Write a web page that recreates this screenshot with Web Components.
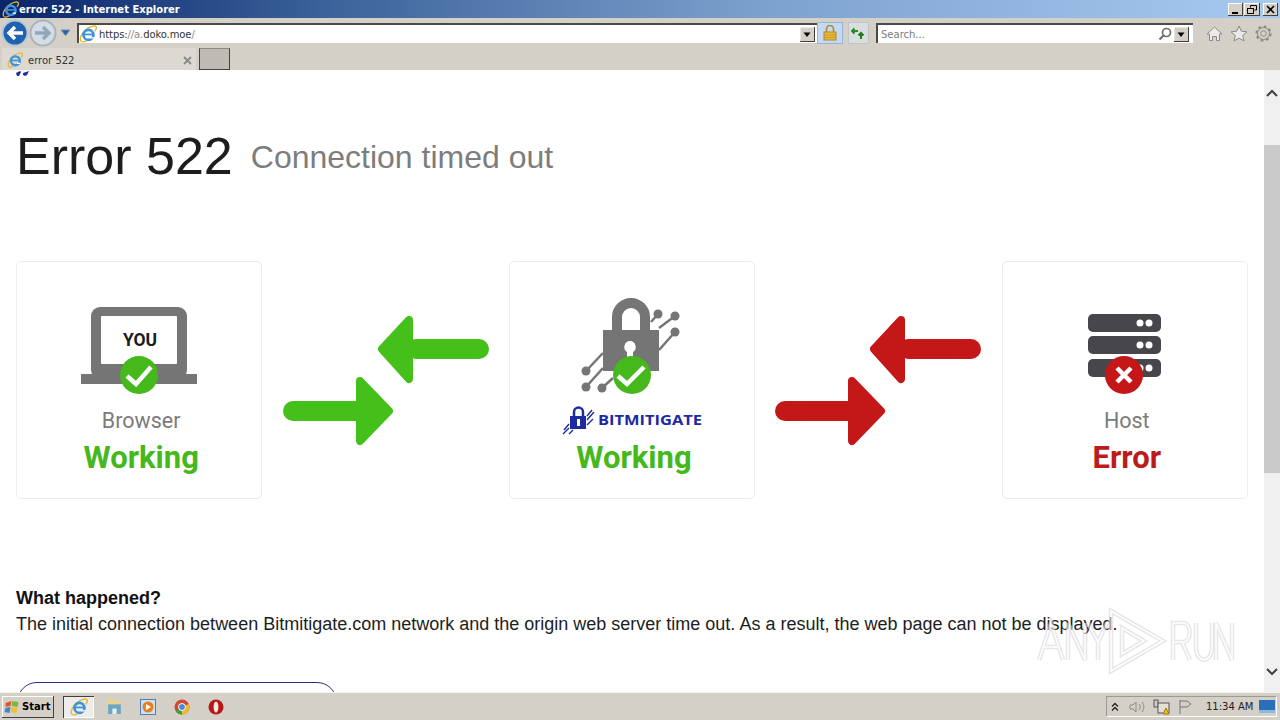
<!DOCTYPE html>
<html>
<head>
<meta charset="utf-8">
<title>error 522 - Internet Explorer</title>
<style>
  html, body { margin: 0; height: 100%; overflow: hidden; }
  body { display: flex; flex-direction: column; width: 1280px; height: 720px; background: #d4d0c8; font-family: "Liberation Sans", Arial, sans-serif; }
  .row { display: flex; flex: 1; min-height: 0; }
  err-page { flex: 1; min-width: 0; }
</style>
</head>
<body>
<ie-titlebar>error 522 - Internet Explorer</ie-titlebar>
<ie-navbar url="https://a.doko.moe/"></ie-navbar>
<ie-tabbar>error 522</ie-tabbar>
<div class="row">
  <err-page>
    <status-card slot="browser" label="Browser" state="Working" tone="ok">
      <svg slot="icon" style="margin-top:38px" width="118" height="96" viewBox="0 0 118 96">
        <rect x="11" y="7" width="96" height="72" rx="9" fill="#757575"/>
        <rect x="21" y="16" width="76" height="48" rx="1" fill="#fff"/>
        <rect x="1" y="74" width="116" height="10" fill="#757575"/>
        <text x="60" y="46" text-anchor="middle" font-family="Roboto, sans-serif" font-weight="700" font-size="17.500" fill="#1b1b1b">YOU</text>
        <circle cx="59" cy="75" r="19" fill="#45b81c"/>
        <path d="M47 76l9 8 15-17" fill="none" stroke="#fff" stroke-width="4.500"/>
      </svg>
    </status-card>
    <flow-arrows slot="arrow1" color="#45c01a"></flow-arrows>
    <status-card slot="mitigate" state="Working" tone="ok">
      <svg slot="icon" style="margin-top:28px" width="144" height="146" viewBox="560 290 144 146">
        <g fill="none" stroke="#757575" stroke-width="2.500">
          <path d="M651 322l7-8M659 328l16-12M659 350l16-18M603 353l-17 18M603 368l-17 19M613 378l-11 10"/>
        </g>
        <g fill="#757575">
          <circle cx="658" cy="314" r="4.500"/><circle cx="675" cy="316" r="4.500"/><circle cx="675" cy="332" r="4.500"/>
          <circle cx="586" cy="371" r="4.500"/><circle cx="586" cy="387" r="4.500"/><circle cx="602" cy="388" r="4.500"/>
        </g>
        <path d="M617 331v-14a14 14 0 0 1 28 0v14" fill="none" stroke="#757575" stroke-width="10"/>
        <rect x="603" y="330" width="56" height="41" fill="#757575"/>
        <path d="M630 341a6 6 0 0 1 3 11v8h-6v-8a6 6 0 0 1 3-11z" fill="#fff"/>
        <circle cx="632" cy="375" r="19" fill="#45b81c"/>
        <path d="M618 376l9 8 17-17" fill="none" stroke="#fff" stroke-width="4.500"/>
        <path d="M574 418v-6a4.500 4.500 0 0 1 9 0v6" fill="none" stroke="#1c2ba0" stroke-width="2.500"/>
        <rect x="570" y="416" width="16" height="13" fill="#1c2ba0"/>
        <rect x="577" y="419" width="3" height="7" fill="#fff"/>
        <path d="M587 416l5-6M587 420l7-8M587 425l6-6M569 424l-5 6M569 428l-6 6M573 430l-4 4" stroke="#1c2ba0" stroke-width="1.400"/>
        <text x="598" y="425" textLength="104" lengthAdjust="spacingAndGlyphs" font-family="'Open Sans', sans-serif" font-weight="700" font-size="14" fill="#1c2ba0">BITMITIGATE</text>
      </svg>
    </status-card>
    <flow-arrows slot="arrow2" color="#c41818"></flow-arrows>
    <status-card slot="host" label="Host" state="Error" tone="bad">
      <svg slot="icon" style="margin-top:38px" width="74" height="96" viewBox="1088 300 74 96">
        <g fill="#46464b">
          <rect x="1088" y="314" width="73" height="18" rx="5"/>
          <rect x="1088" y="336" width="73" height="18" rx="5"/>
          <rect x="1088" y="359" width="73" height="18" rx="5"/>
        </g>
        <g fill="#fff">
          <circle cx="1140" cy="323" r="3.500"/><circle cx="1149" cy="323" r="3.500"/>
          <circle cx="1140" cy="345" r="3.500"/><circle cx="1149" cy="345" r="3.500"/>
          <circle cx="1140" cy="368" r="3.500"/><circle cx="1149" cy="368" r="3.500"/>
        </g>
        <circle cx="1124" cy="375" r="19" fill="#c41818"/>
        <path d="M1117 368l14 14M1131 368l-14 14" stroke="#fff" stroke-width="4.500"/>
      </svg>
    </status-card>
  </err-page>
  <page-scrollbar></page-scrollbar>
</div>
<win-taskbar></win-taskbar>

<script>
// shared IE "e" logo, used in the title bar, address bar, tab and taskbar
const IE_LOGO = (size) => `
  <svg width="${size}" height="${size}" viewBox="0 0 20 20">
    <path d="M2 18C0 14 4 7 10 3.500c4-2.500 8-3 9-1.500 .8 1.300-.3 3.500-1.500 5" fill="none" stroke="#e6b52c" stroke-width="1.500"/>
    <circle cx="10.500" cy="11" r="5.500" fill="none" stroke="#3d93dc" stroke-width="3"/>
    <path d="M6 10.500h9.500" stroke="#3d93dc" stroke-width="2"/>
    <path d="M16.500 13.500h-4v1.500h4z" fill="#fff"/>
    <path d="M2 18c1 1.300 3.500 1 6.500-.3" fill="none" stroke="#e6b52c" stroke-width="1.400"/>
  </svg>`;

class IeTitlebar extends HTMLElement {
  constructor() {
    super();
    this.attachShadow({ mode: "open" });
    this.shadowRoot.innerHTML = `
      <style>
        :host { display: flex; align-items: center; height: 18px; flex: none; padding: 0 2px 0 2px;
          background: linear-gradient(90deg, #0a246a 0%, #3a6199 25%, #7ea2cf 60%, #a6caf0 100%); }
        .t { flex: 1; color: #fff; font: 700 10px "DejaVu Sans", Tahoma, sans-serif; white-space: nowrap; }
        .btns { display: flex; gap: 1px; }
        .b { width: 15px; height: 13px; background: #d4d0c8; box-shadow: inset -1px -1px #404040, inset 1px 1px #fff; display: flex; align-items: center; justify-content: center; }
        .b:nth-child(2) { width: 16px; margin-right: 2px; }
      </style>
      ${IE_LOGO(17)}
      <span class="t"><slot></slot></span>
      <div class="btns">
        <div class="b"><svg width="9" height="9"><rect x="1" y="7" width="6" height="2"/></svg></div>
        <div class="b"><svg width="10" height="9" fill="none" stroke="#000"><path d="M3.500 2.500V.5h6v4.500h-2"/><rect x=".5" y="3.500" width="6" height="5"/></svg></div>
        <div class="b"><svg width="9" height="9" stroke="#000" stroke-width="1.600"><path d="M1 1l7 7M8 1L1 8"/></svg></div>
      </div>`;
  }
}

class IeNavbar extends HTMLElement {
  constructor() {
    super();
    this.attachShadow({ mode: "open" });
    const combo = `<svg class="combo" width="15" height="15"><rect width="15" height="15" fill="#d4d0c8"/><path d="M0 15V0h15" fill="none" stroke="#fff"/><path d="M15 0v15H0" fill="none" stroke="#404040" stroke-width="2"/><path d="M3.500 5.500h7l-3.500 4.500z"/></svg>`;
    this.shadowRoot.innerHTML = `
      <style>
        :host { display: flex; align-items: center; height: 30px; flex: none; padding: 0 0 0 1px; box-sizing: border-box;
          background: #d4d0c8; font: 10px "DejaVu Sans", Tahoma, sans-serif; }
        .nav { display: flex; align-items: center; width: 76px; flex: none; }
        .input { height: 20px; box-sizing: border-box; display: flex; align-items: center; background: #fff;
          border-top: 2px solid #4b4a44; border-left: 2px solid #4b4a44; padding-right: 2px; }
        .addr { width: 740px; flex: none; }
        .addr .u { flex: 1; margin-left: 2px; color: #333; letter-spacing: -.1px; }
        .u i { font-style: normal; color: #8a8a8a; }
        .lock { width: 26px; height: 22px; margin-left: 0; box-sizing: border-box; background: #c5d9f3; border: 1px solid #97b4da; display: flex; justify-content: center; align-items: center; }
        .refresh { width: 21px; height: 22px; margin-left: 5px; box-sizing: border-box; background: #d9dfe0; border: 1px solid #c1c5c2; display: flex; justify-content: center; align-items: center; }
        .search { width: 317px; flex: none; margin-left: 7px; padding-right: 4px; }
        .search .q { flex: 1; margin-left: 3px; color: #7c7c7c; }
        .tools { display: flex; align-items: center; gap: 7px; margin-left: 13px; }
      </style>
      <div class="nav">
        <svg width="28" height="28" viewBox="0 0 28 28">
          <circle cx="14" cy="14" r="12.500" fill="#1e62b0" stroke="#b8c7d8" stroke-width="2"/>
          <path d="M22 14H9M14 8l-6 6 6 6" fill="none" stroke="#fff" stroke-width="3.400"/>
        </svg>
        <svg width="28" height="28" viewBox="0 0 28 28">
          <circle cx="14" cy="14" r="12.500" fill="#d5dde4" stroke="#a7b3bd" stroke-width="2"/>
          <path d="M6 14h13M14 8l6 6-6 6" fill="none" stroke="#8fa6bb" stroke-width="3.400"/>
        </svg>
        <svg width="11" height="8" style="margin-left:3px"><path d="M1 1h9L5.500 6.500z" fill="#1e62b0" stroke="#7a8b9c"/></svg>
      </div>
      <div class="input addr">
        ${IE_LOGO(18)}
        <span class="u">https:<i>//a.</i>doko.moe<i>/</i></span>
        ${combo}
      </div>
      <div class="lock">
        <svg width="14" height="16" viewBox="0 0 14 16"><path d="M3.500 7V4a3.500 3.500 0 0 1 7 0v3" fill="none" stroke="#b48a1c" stroke-width="1.600"/><rect x="1" y="7" width="12" height="8" fill="#e6b93c" stroke="#b48a1c"/><path d="M1 10h12M1 12.500h12" stroke="#b48a1c" stroke-width=".6"/></svg>
      </div>
      <div class="refresh">
        <svg width="15" height="13" viewBox="0 0 15 13" fill="none" stroke="#2c8a22" stroke-width="2"><path d="M1 4h6M3.500 1.500L1 4l2.500 2.500"/><path d="M10 12V6M7.500 8.500L10 6l2.500 2.500" stroke="#1f7a1a"/></svg>
      </div>
      <div class="input search">
        <span class="q">Search...</span>
        <svg width="14" height="14" viewBox="0 0 14 14" fill="none" stroke="#6d6d6d" stroke-width="1.700" style="margin-right:2px"><circle cx="8.500" cy="5.500" r="4"/><path d="M5.500 8.500L1.500 12.500" stroke-width="2.200"/></svg>
        ${combo}
      </div>
      <div class="tools">
        <svg width="17" height="17" viewBox="0 0 17 17" fill="#eceae6" stroke="#8c8a86"><path d="M1 9l7.500-7 7.500 7h-2.500v6.500h-3v-4h-4v4h-3V9z"/></svg>
        <svg width="18" height="17" viewBox="0 0 18 17" fill="#eceae6" stroke="#8c8a86"><path d="M9 1l2.300 5.200 5.700.6-4.300 3.700 1.300 5.500L9 13.100 4 16l1.300-5.500L1 6.800l5.700-.6z"/></svg>
        <svg width="17" height="17" viewBox="0 0 17 17" fill="none" stroke="#8c8a86"><circle cx="8.500" cy="8.500" r="2.800"/><circle cx="8.500" cy="8.500" r="6" stroke-width="1"/><circle cx="8.500" cy="8.500" r="7" stroke-width="2.200" stroke-dasharray="2.700 2.800" /></svg>
      </div>`;
  }
}

class IeTabbar extends HTMLElement {
  constructor() {
    super();
    this.attachShadow({ mode: "open" });
    this.shadowRoot.innerHTML = `
      <style>
        :host { display: flex; align-items: flex-end; height: 22px; flex: none; padding-left: 2px; box-sizing: border-box;
          background: #d4d0c8; font: 10px "DejaVu Sans", Tahoma, sans-serif; color: #333; }
        .tab { width: 194px; height: 22px; box-sizing: border-box; display: flex; align-items: center; padding: 2px 4px 0 5px; background: #dcd8d2; }
        .tab span { flex: 1; margin-left: 5px; }
        .new { width: 31px; height: 22px; box-sizing: border-box; margin-left: 3px; background: #bfbab4; border: 1px solid #45433f; border-top-color: #8c8a86; }
      </style>
      <div class="tab">
        ${IE_LOGO(16)}
        <span><slot></slot></span>
        <svg width="9" height="9" stroke="#8c8a86" stroke-width="1.800"><path d="M1 1l7 7M8 1L1 8"/></svg>
      </div>
      <div class="new"></div>`;
  }
}

class StatusCard extends HTMLElement {
  constructor() {
    super();
    this.attachShadow({ mode: "open" });
    const label = this.getAttribute("label");
    const tone = this.getAttribute("tone") === "bad" ? "#bd1a1a" : "#45b81c";
    this.shadowRoot.innerHTML = `
      <style>
        :host { display: flex; flex-direction: column; align-items: center; height: 238px; box-sizing: border-box;
          background: #fff; border: 1px solid #ececec; border-radius: 5px; font-family: Roboto, "Liberation Sans", sans-serif; }
        .icon { height: 146px; width: 100%; display: flex; justify-content: center; align-items: flex-start; }
        :host(:not([label])) .icon { height: 177px; }
        .label { height: 31px; font-size: 21.500px; line-height: 26px; color: #7b7b7b; padding-left: 4px; }
        .state { font-size: 31px; line-height: 38px; font-weight: 700; color: ${tone}; padding-left: 4px; }
      </style>
      <div class="icon"><slot name="icon"></slot></div>
      ${label ? `<div class="label">${label}</div>` : ""}
      <div class="state">${this.getAttribute("state")}</div>`;
  }
}

class FlowArrows extends HTMLElement {
  constructor() {
    super();
    this.attachShadow({ mode: "open" });
    const c = this.getAttribute("color");
    this.shadowRoot.innerHTML = `
      <style>
        :host { display: flex; justify-content: center; align-items: center; height: 238px; }
        svg { display: block; }
      </style>
      <svg width="210" height="133" viewBox="0 0 210 133">
        <g fill="${c}" stroke="${c}" stroke-linejoin="round">
          <path d="M135 35h63" stroke-width="20" stroke-linecap="round"/>
          <path d="M128 6L101 35l27 30z" stroke-width="8"/>
          <path d="M12 97h68" stroke-width="20" stroke-linecap="round"/>
          <path d="M79 67l29 30-29 30z" stroke-width="8"/>
        </g>
      </svg>`;
  }
}

class ErrPage extends HTMLElement {
  constructor() {
    super();
    this.attachShadow({ mode: "open" });
    this.shadowRoot.innerHTML = `
      <style>
        :host { display: block; position: relative; overflow: hidden; background: #fff; color: #1d1d1d;
          font-family: "Liberation Sans", Arial, sans-serif; }
        .peek { display: block; margin-left: 16px; height: 7px; }
        h1 { margin: 46px 0 0 16px; display: flex; align-items: center; height: 66px; font-weight: 400; font-size: 52px; line-height: 66px; }
        h1 span { margin-left: 18px; padding-top: 2px; font-size: 32px; color: #7d7d7d; }
        .flow { display: grid; grid-template-columns: repeat(5, 246.4px); margin: 72px 0 0 16px; }
        h2 { margin: 87px 0 0 16px; font-size: 18px; line-height: 24px; font-weight: 700; color: #111; }
        p { margin: 2px 0 0 16px; font-size: 18px; line-height: 24px; color: #1d1d1d; white-space: nowrap; }
        .more { margin: 46px 0 0 17px; width: 320px; height: 60px; box-sizing: border-box; border: 1px solid #2b2b80; border-radius: 20px; }
        .mark { position: absolute; left: 1036px; top: 536px; opacity: .6; }
      </style>
      <svg class="peek" width="16" height="7" viewBox="0 0 16 7" fill="#1c2ba0"><path d="M0 3l4-2 1 1-2 4H1zM7 3l6-2-2 4-2 1-2-1z"/></svg>
      <h1>Error 522<span>Connection timed out</span></h1>
      <div class="flow">
        <slot name="browser"></slot>
        <slot name="arrow1"></slot>
        <slot name="mitigate"></slot>
        <slot name="arrow2"></slot>
        <slot name="host"></slot>
      </div>
      <h2>What happened?</h2>
      <p>The initial connection between Bitmitigate.com network and the origin web server time out. As a result, the web page can not be displayed.</p>
      <div class="more"></div>
      <svg class="mark" width="200" height="70" viewBox="1036 606 200 70" fill="none">
        <defs>
          <path id="wm" d="M1039 660l12-37 12 37M1044 647h14M1068 660v-37l17 37v-37M1088 623l10 19 9-19M1098 642v18M1111 611v60l52-30zM1122 628v26l22-13zM1173 660v-37h10c9 0 9 19 0 19h-10M1182 642l8 18M1196 623v24c0 17 16 17 16 0v-24M1216 660v-37l16 37v-37"/>
        </defs>
        <use href="#wm" stroke="#d8d8d8" stroke-width="4.500"/>
        <use href="#wm" stroke="#fff" stroke-width="1.500"/>
      </svg>`;
  }
}

class PageScrollbar extends HTMLElement {
  constructor() {
    super();
    this.attachShadow({ mode: "open" });
    this.shadowRoot.innerHTML = `
      <style>
        :host { display: flex; flex-direction: column; width: 16px; flex: none; background: #f0f0f0; }
        .up, .down { height: 17px; flex: none; display: flex; justify-content: center; align-items: center; }
        .up { margin-top: 14px; }
        .gap1 { height: 44px; flex: none; }
        .thumb { height: 328px; flex: none; background: #cacaca; }
        .gap2 { flex: 1; }
        .down { margin-bottom: 12px; }
      </style>
      <div class="up"><svg width="12" height="8" fill="none" stroke="#404040" stroke-width="2"><path d="M1 7l5-5 5 5"/></svg></div>
      <div class="gap1"></div>
      <div class="thumb"></div>
      <div class="gap2"></div>
      <div class="down"><svg width="12" height="8" fill="none" stroke="#404040" stroke-width="2"><path d="M1 1l5 5 5-5"/></svg></div>`;
  }
}

class WinTaskbar extends HTMLElement {
  constructor() {
    super();
    this.attachShadow({ mode: "open" });
    this.shadowRoot.innerHTML = `
      <style>
        :host { display: flex; align-items: center; height: 28px; flex: none; box-sizing: border-box; background: #d4d0c8;
          border-top: 1px solid #f4f2ee; padding: 0 3px 0 2px; font: 10px "DejaVu Sans", Tahoma, sans-serif; color: #000; }
        .start { display: flex; align-items: center; gap: 1px; width: 52px; height: 22px; box-sizing: border-box; padding-left: 2px;
          box-shadow: inset -1px -1px #404040, inset 1px 1px #fff; font-weight: 700; }
        .apps { display: flex; align-items: center; margin-left: 9px; flex: 1; }
        .app { width: 34px; height: 22px; display: flex; justify-content: center; align-items: center; }
        .app.on { width: 31px; margin-right: 3px; background: #eeece8; box-shadow: inset 1px 1px #404040, inset -1px -1px #fff; }
        .tray { display: flex; align-items: center; width: 171px; height: 21px; box-sizing: border-box; padding: 0 1px 0 4px;
          border: 1px solid #9c9a94; border-right-color: #fff; border-bottom-color: #fff; color: #222; }
        .time { margin-left: 13px; white-space: nowrap; }
        .tray svg { flex: none; margin-right: 8px; }
        .tray svg:last-child { margin: 0 0 0 auto; }
      </style>
      <div class="start">
        <svg width="17" height="16" viewBox="0 0 16 16"><path d="M1 4l6-2-1 5-5 1z" fill="#e2562a"/><path d="M8 2l6 1-1 5-6-1z" fill="#7ab93c"/><path d="M1 9l5-1-1 6-5-1z" fill="#3a84d0"/><path d="M7 8l6 1-1 5-6-1z" fill="#f0c030"/></svg>
        <span>Start</span>
      </div>
      <div class="apps">
        <div class="app on">${IE_LOGO(18)}</div>
        <div class="app"><svg width="17" height="17" viewBox="0 0 16 16"><path d="M1 1h5l1 2h8v12H1z" fill="#e8d48a"/><rect x="2" y="6" width="12" height="9" fill="#6aa6c8"/><rect x="6" y="10" width="4" height="5" fill="#e8eef2"/></svg></div>
        <div class="app"><svg width="16" height="16" viewBox="0 0 16 16"><rect x=".5" y=".5" width="15" height="15" fill="#cfe0f2" stroke="#4a7fc0"/><circle cx="8" cy="8" r="5.500" fill="#e8801c"/><path d="M6 5l5 3-5 3z" fill="#fff"/></svg></div>
        <div class="app"><svg width="16" height="16" viewBox="0 0 16 16"><circle cx="8" cy="8" r="7.500" fill="#d8452f"/><path d="M8 8L1.500 12A7.500 7.500 0 0 0 8 15.500z" fill="#3f9e48"/><path d="M8 8l6.800-3A7.500 7.500 0 0 1 8 15.500z" fill="#e8bb30"/><circle cx="8" cy="8" r="3.500" fill="#4a86d8" stroke="#fff"/></svg></div>
        <div class="app"><svg width="16" height="16" viewBox="0 0 16 16"><circle cx="8" cy="8" r="7.500" fill="#b81616"/><ellipse cx="8" cy="8" rx="2.400" ry="5.500" fill="#f4e8e0"/></svg></div>
      </div>
      <div class="tray">
        <svg width="8" height="10" fill="none" stroke="#222" stroke-width="1.300" style="margin-right:10px"><path d="M1 4.500l3-3 3 3M1 8.500l3-3 3 3"/></svg>
        <svg width="16" height="14" viewBox="0 0 16 14" fill="none" stroke="#8c8a86"><path d="M1 5h3l3-3v10l-3-3H1zM10 4c1.500 2 1.500 4 0 6M13 2c2.500 3 2.500 7 0 10"/></svg>
        <svg width="17" height="16" viewBox="0 0 17 16" fill="none" stroke="#555"><rect x="1" y="1" width="4" height="7"/><rect x="5" y="4" width="11" height="10" fill="#e4e0d8"/><path d="M10 15l3-6 3 6z" fill="#eec020" stroke="#9a7c10"/></svg>
        <svg width="15" height="16" viewBox="0 0 15 16" fill="none" stroke="#777" style="margin-right:0"><path d="M2 1v14M2 2h7l4 3-4 3H2"/></svg>
        <span class="time">11:34 AM</span>
        <svg width="16" height="13" viewBox="0 0 16 13"><rect width="16" height="13" fill="#2a70b8"/><rect y="10" width="16" height="3" fill="#8fb8de"/></svg>
      </div>`;
  }
}

customElements.define("ie-titlebar", IeTitlebar);
customElements.define("ie-navbar", IeNavbar);
customElements.define("ie-tabbar", IeTabbar);
customElements.define("status-card", StatusCard);
customElements.define("flow-arrows", FlowArrows);
customElements.define("err-page", ErrPage);
customElements.define("page-scrollbar", PageScrollbar);
customElements.define("win-taskbar", WinTaskbar);
</script>
</body>
</html>
